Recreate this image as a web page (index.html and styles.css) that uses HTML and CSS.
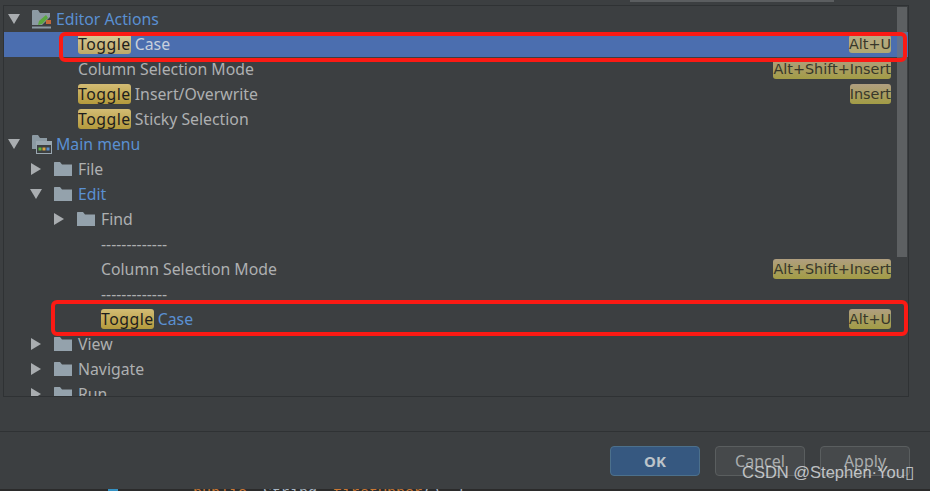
FILE: index.html
```html
<!DOCTYPE html>
<html lang="en">
<head>
  <meta charset="UTF-8" />
  <meta name="viewport" content="width=device-width, initial-scale=1.0" />
  <title>Keymap</title>
  <link rel="stylesheet" href="styles.css">
</head>
<body>
  <svg class="defs" width="0" height="0" aria-hidden="true">
    <symbol id="folder" viewBox="0 0 18 16">
      <path d="M0 1.5 L0 15 L18 15 L18 3.5 L8 3.5 L6 1 L0.5 1 Z" fill="#94a2ac" />
    </symbol>
  </svg>

  <div class="top-field"></div>

  <div class="tree-panel">
    <div class="row lv0">
      <svg class="arrow" viewBox="0 0 12 12"><path d="M0 1 L12 1 L6 11 Z" /></svg>
      <svg class="group-icon" viewBox="0 0 20 19">
        <path d="M0 1 L0 15 L10 15 L18 7 L18 3 L8 3 L6 0 L0.5 0 Z" fill="#8c9aa3" />
        <rect x="0" y="16.5" width="19" height="2" fill="#8c9aa3" />
        <path d="M6 15 L7 11 L14 5 L16 8 L10 14 Z" fill="#5aa83f" />
        <path d="M14 10 L19 10 L19 14 L14 14 Z" fill="#c4683a" />
      </svg>
      <span class="label link">Editor Actions</span>
    </div>
    <div class="row leaf1 selected">
      <span class="label"><mark>Toggle</mark> Case</span>
      <kbd>Alt+U</kbd>
    </div>
    <div class="row leaf1">
      <span class="label">Column Selection Mode</span>
      <kbd>Alt+Shift+Insert</kbd>
    </div>
    <div class="row leaf1">
      <span class="label"><mark>Toggle</mark> Insert/Overwrite</span>
      <kbd>Insert</kbd>
    </div>
    <div class="row leaf1">
      <span class="label"><mark>Toggle</mark> Sticky Selection</span>
    </div>
    <div class="row lv0">
      <svg class="arrow" viewBox="0 0 12 12"><path d="M0 1 L12 1 L6 11 Z" /></svg>
      <svg class="group-icon" viewBox="0 0 20 19">
        <path d="M0 1 L0 14 L15 14 L15 3 L8 3 L6 0 L0.5 0 Z" fill="#8c9aa3" />
        <rect x="4.5" y="6.5" width="15" height="12" fill="#3c3f41" stroke="#9aa7b0" />
        <rect x="5" y="7" width="14" height="3" fill="#9aa7b0" />
        <rect x="6.5" y="12.5" width="3" height="3" fill="#62b543" />
        <rect x="10.5" y="12.5" width="3" height="3" fill="#d9a343" />
        <rect x="14.5" y="12.5" width="3" height="3" fill="#5a8fd0" />
      </svg>
      <span class="label link">Main menu</span>
    </div>
    <div class="row lv1">
      <svg class="arrow" viewBox="0 0 12 12"><path d="M1 0 L11 6 L1 12 Z" /></svg>
      <svg class="folder"><use href="#folder" /></svg>
      <span class="label">File</span>
    </div>
    <div class="row lv1">
      <svg class="arrow" viewBox="0 0 12 12"><path d="M0 1 L12 1 L6 11 Z" /></svg>
      <svg class="folder"><use href="#folder" /></svg>
      <span class="label link">Edit</span>
    </div>
    <div class="row lv2">
      <svg class="arrow" viewBox="0 0 12 12"><path d="M1 0 L11 6 L1 12 Z" /></svg>
      <svg class="folder"><use href="#folder" /></svg>
      <span class="label">Find</span>
    </div>
    <div class="row leaf2"><span class="label">-------------</span></div>
    <div class="row leaf2">
      <span class="label">Column Selection Mode</span>
      <kbd>Alt+Shift+Insert</kbd>
    </div>
    <div class="row leaf2"><span class="label">-------------</span></div>
    <div class="row leaf2">
      <span class="label"><mark>Toggle</mark> <span class="link">Case</span></span>
      <kbd>Alt+U</kbd>
    </div>
    <div class="row lv1">
      <svg class="arrow" viewBox="0 0 12 12"><path d="M1 0 L11 6 L1 12 Z" /></svg>
      <svg class="folder"><use href="#folder" /></svg>
      <span class="label">View</span>
    </div>
    <div class="row lv1">
      <svg class="arrow" viewBox="0 0 12 12"><path d="M1 0 L11 6 L1 12 Z" /></svg>
      <svg class="folder"><use href="#folder" /></svg>
      <span class="label">Navigate</span>
    </div>
    <div class="row lv1">
      <svg class="arrow" viewBox="0 0 12 12"><path d="M1 0 L11 6 L1 12 Z" /></svg>
      <svg class="folder"><use href="#folder" /></svg>
      <span class="label">Run</span>
    </div>
    <div class="scrollbar"></div>
  </div>

  <div class="footer">
    <button class="primary">OK</button>
    <button>Cancel</button>
    <button>Apply</button>
  </div>

  <div class="editor-strip">
    <span class="gutter-icon"></span>
    <code><span class="kw">public</span> String <span class="kw">firstUpper</span>() {</code>
  </div>

  <div class="callout callout-top"></div>
  <div class="callout callout-bottom"></div>
  <div class="watermark">CSDN @Stephen·You▯</div>
</body>
</html>
```

FILE: styles.css
```css
*, *::before, *::after { box-sizing: border-box; }

html, body {
  height: 100%;
  margin: 0;
}

body {
  position: relative;
  display: flex;
  flex-direction: column;
  overflow: hidden;
  background-color: #3c3f41;
  color: #aeb0b1;
  font-family: "Noto Sans", "Open Sans", sans-serif;
  font-size: 15.8px;
}

.defs { position: absolute; }

.top-field {
  flex: none;
  width: 204px;
  height: 2px;
  margin-left: 630px;
  background-color: #5b5e60;
}

.tree-panel {
  position: relative;
  flex: none;
  height: 392px;
  margin: 3px 21px 0 3px;
  padding-top: 1px;
  border: 1px solid #2f3234;
  overflow: hidden;
}

.row {
  display: flex;
  align-items: center;
  height: 25px;
  padding-right: 17px;
  white-space: nowrap;
}

.row.lv0 { padding-left: 4px; }
.row.lv1 { padding-left: 26px; }
.row.lv2 { padding-left: 49px; }
.row.leaf1 { padding-left: 74px; }
.row.leaf2 { padding-left: 97px; }

.row.selected {
  background-color: #4b6eaf;
  color: #c8d0dc;
}

.label {
  line-height: 20px;
  margin-top: -1px;
}

.arrow {
  flex: none;
  width: 12px;
  height: 12px;
  margin: -1px 12px 0 0;
  fill: #a9adb0;
}

.group-icon {
  flex: none;
  width: 20px;
  height: 19px;
  margin: -1px 4px 0 0;
}

.folder {
  flex: none;
  width: 18px;
  height: 16px;
  margin: -1px 6px 0 0;
}

.link { color: #5a90d2; }

mark {
  display: inline-block;
  height: 20px;
  line-height: 20px;
  border-radius: 3px;
  color: #1d1d1d;
  letter-spacing: 0.5px;
  background: linear-gradient(#d3bc74, #b49a3c);
}

.selected mark {
  background: linear-gradient(#d9cb98, #bda968);
}

kbd {
  margin: -1px 0 0 auto;
  height: 20px;
  line-height: 20px;
  border-radius: 3px;
  color: #37372a;
  font-family: "DejaVu Sans", sans-serif;
  font-size: 14.4px;
  background: linear-gradient(#b09f80, #a29c45);
}

.selected kbd {
  height: 18px;
  line-height: 18px;
  background: linear-gradient(#b8ab85, #b0a870);
}

.scrollbar {
  position: absolute;
  top: 1px;
  right: 1px;
  width: 10px;
  height: 250px;
  background-color: rgba(115, 118, 120, 0.6);
}

.footer {
  flex: none;
  display: flex;
  justify-content: flex-end;
  gap: 15px;
  height: 58px;
  margin-top: 34px;
  padding: 14px 20px 0 0;
  border-top: 1px solid #2f3234;
}

button {
  width: 90px;
  height: 30px;
  padding: 0;
  border: 1px solid #5a5e5f;
  border-radius: 4px;
  background-color: #46494b;
  color: #a9acad;
  font-family: inherit;
  font-size: 16px;
}

button.primary {
  border-color: #4c708c;
  background-color: #365880;
  color: #bcc3c9;
  font-size: 15px;
  font-weight: bold;
}

.editor-strip {
  flex: none;
  display: flex;
  height: 3px;
  overflow: hidden;
  background-color: #2b2b2b;
  color: #a9b7c6;
}

.editor-strip code {
  margin: -3px 0 0 75px;
  font-family: "Liberation Mono", monospace;
  font-size: 15px;
  line-height: 15px;
  word-spacing: 7px;
}

.gutter-icon {
  flex: none;
  width: 10px;
  height: 3px;
  margin-left: 108px;
  background-color: #3592c4;
}

.kw { color: #cc7832; }

.callout {
  position: absolute;
  border: 4px solid #fb1a14;
  border-radius: 6px;
}

.callout-top {
  left: 59px;
  top: 32px;
  width: 848px;
  height: 30px;
}

.callout-bottom {
  left: 51px;
  top: 300px;
  width: 857px;
  height: 36px;
}

.watermark {
  position: absolute;
  left: 742px;
  top: 462px;
  color: rgba(225, 228, 230, 0.8);
  font-family: "Liberation Sans", sans-serif;
  font-size: 16.5px;
  line-height: 20px;
  white-space: nowrap;
}
```
